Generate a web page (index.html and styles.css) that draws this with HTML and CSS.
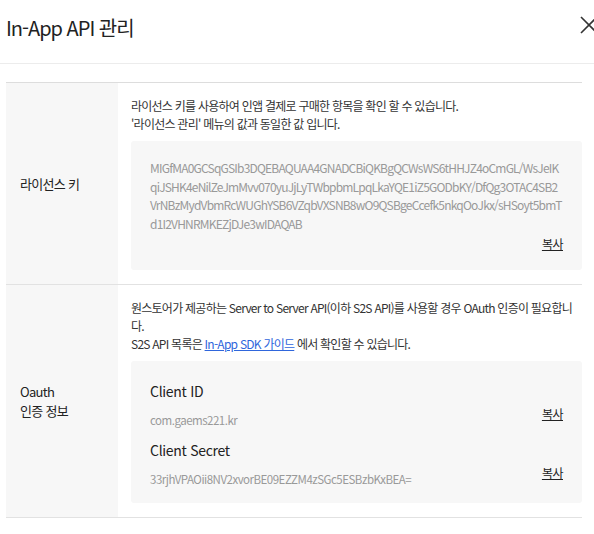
FILE: index.html
```html
<!DOCTYPE html>
<html lang="ko">
<head>
<meta charset="utf-8">
<title>In-App API 관리</title>
<link rel="stylesheet" href="styles.css">
</head>
<body>
<div class="modal">
  <header class="modal-header">
    <h1 class="modal-title">In-App API 관리</h1>
    <button class="close-btn" type="button" aria-label="닫기">
      <svg width="18" height="18" viewBox="0 0 18 18"><path d="M1 1 L17 17 M17 1 L1 17" stroke="#333" stroke-width="1.6" fill="none"/></svg>
    </button>
  </header>
  <div class="modal-body">
    <div class="info-table">
      <div class="row">
        <div class="label">라이선스 키</div>
        <div class="content">
          <p class="desc">라이선스 키를 사용하여 인앱 결제로 구매한 항목을 확인 할 수 있습니다.<br>'라이선스 관리' 메뉴의 값과 동일한 값 입니다.</p>
          <div class="box">
            <p class="key">MIGfMA0GCSqGSIb3DQEBAQUAA4GNADCBiQKBgQCWsWS6tHHJZ4oCmGL/WsJeIK<br>qiJSHK4eNilZeJmMvv070yuJjLyTWbpbmLpqLkaYQE1iZ5GODbKY/DfQg3OTAC4SB2<br>VrNBzMydVbmRcWUGhYSB6VZqbVXSNB8wO9QSBgeCcefk5nkqOoJkx/sHSoyt5bmT<br>d1I2VHNRMKEZjDJe3wIDAQAB</p>
            <div class="copy-row"><a class="copy" href="#">복사</a></div>
          </div>
        </div>
      </div>
      <div class="row">
        <div class="label">Oauth<br>인증 정보</div>
        <div class="content">
          <p class="desc">원스토어가 제공하는 Server to Server API(이하 S2S API)를 사용할 경우 OAuth 인증이 필요합니다.<br>S2S API 목록은 <a class="link" href="#">In-App SDK 가이드</a> 에서 확인할 수 있습니다.</p>
          <div class="box box-cred">
            <div class="cred">
              <div class="cred-main">
                <div class="cred-name">Client ID</div>
                <div class="cred-value">com.gaems221.kr</div>
              </div>
              <a class="copy cred-copy" href="#">복사</a>
            </div>
            <div class="cred">
              <div class="cred-main">
                <div class="cred-name">Client Secret</div>
                <div class="cred-value">33rjhVPAOii8NV2xvorBE09EZZM4zSGc5ESBzbKxBEA=</div>
              </div>
              <a class="copy cred-copy" href="#">복사</a>
            </div>
          </div>
        </div>
      </div>
    </div>
  </div>
</div>
</body>
</html>
```
FILE: styles.css
```css
* { box-sizing: border-box; }
html, body { margin: 0; padding: 0; }
body {
  background: #fff;
  font-family: "Noto Sans CJK KR", "Noto Sans", sans-serif;
  font-feature-settings: "palt";
  color: #333;
  overflow: hidden;
}
.modal { width: 594px; }
.modal-header {
  height: 64px;
  border-bottom: 1px solid #ececec;
  display: flex;
  justify-content: space-between;
  align-items: flex-start;
  overflow: hidden;
}
.modal-title {
  margin: 13px 0 0 6px;
  font-size: 20px;
  line-height: 30px;
  font-weight: 400;
  letter-spacing: -1px;
  color: #222;
}
.close-btn {
  margin: 16px -4px 0 0;
  padding: 0;
  border: 0;
  background: none;
  width: 18px;
  height: 18px;
  display: block;
}
.close-btn svg { display: block; }
.modal-body { padding: 18px 12px 0 6px; }
.info-table { border-top: 1px solid #ddd; }
.row {
  display: grid;
  grid-template-columns: 112px 1fr;
  border-bottom: 1px solid #e2e2e2;
}
.label {
  background: #f7f7f7;
  display: flex;
  align-items: center;
  padding-left: 14px;
  font-size: 13px;
  line-height: 19px;
  letter-spacing: -0.7px;
  color: #222;
}
.content { padding: 14px 0 14px 13px; }
.desc {
  margin: 0;
  font-size: 12px;
  line-height: 18px;
  letter-spacing: -0.75px;
  color: #333;
}
.link { color: #2f66dc; text-decoration: underline; }
.box {
  margin-top: 8px;
  background: #f7f7f7;
  border-radius: 3px;
  padding: 18px 19px 17px;
}
.key {
  margin: 0;
  font-size: 12px;
  line-height: 18.5px;
  letter-spacing: -0.8px;
  color: #999;
  word-break: break-all;
}
.copy-row { display: flex; justify-content: flex-end; margin-top: 2px; }
.copy {
  font-size: 12px;
  line-height: 18px;
  letter-spacing: -0.5px;
  color: #222;
  text-decoration: underline;
}
.box-cred { padding: 20px 19px 15px; }
.cred { display: flex; justify-content: space-between; }
.cred + .cred { margin-top: 11px; }
.cred-name {
  font-size: 14px;
  line-height: 20px;
  letter-spacing: -0.3px;
  color: #222;
}
.cred-value {
  margin-top: 10px;
  font-size: 11.5px;
  line-height: 18px;
  letter-spacing: -0.5px;
  color: #999;
}
.cred-copy { align-self: flex-end; margin-bottom: 6px; }
```
